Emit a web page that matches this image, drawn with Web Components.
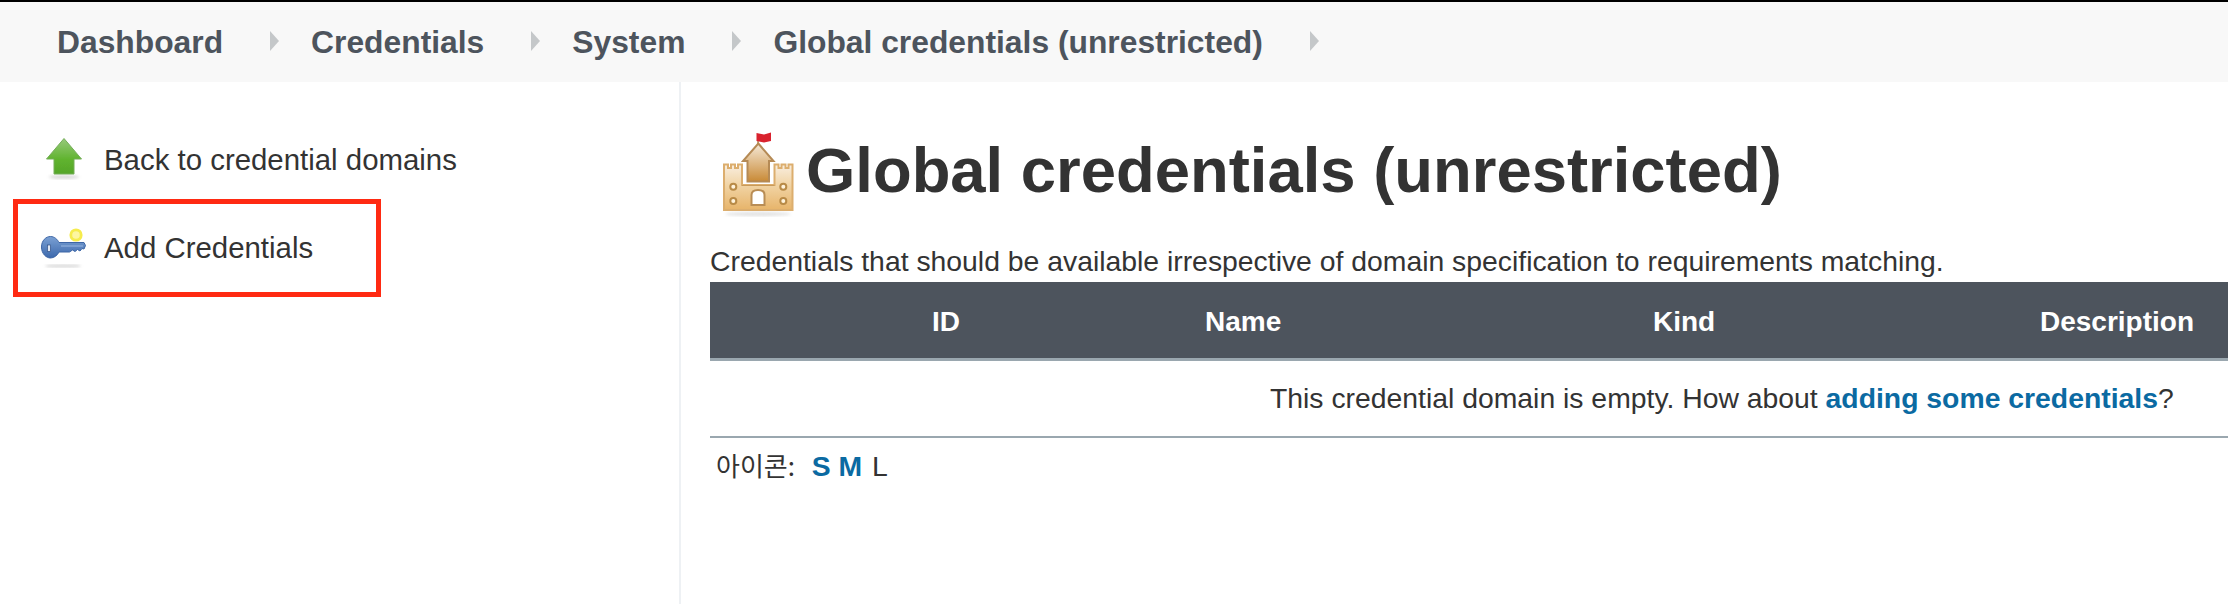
<!DOCTYPE html>
<html lang="en"><head><meta charset="utf-8"><title>Global credentials</title>
<style>
html,body{margin:0;padding:0;background:#fff;overflow:hidden}
body{font-family:"Liberation Sans",Arial,"Noto Sans CJK KR",sans-serif;color:#333}
</style></head><body>
<jk-page>
  <jk-breadcrumbs slot="top">
    <jk-crumb>Dashboard</jk-crumb><jk-crumb>Credentials</jk-crumb><jk-crumb>System</jk-crumb><jk-crumb>Global credentials (unrestricted)</jk-crumb>
  </jk-breadcrumbs>
  <jk-side slot="side">
    <jk-task icon="up">Back to credential domains</jk-task>
    <jk-task icon="key" highlighted>Add Credentials</jk-task>
  </jk-side>
  <jk-main>
    <jk-title>Global credentials (unrestricted)</jk-title>
    <jk-desc>Credentials that should be available irrespective of domain specification to requirements matching.</jk-desc>
    <jk-table></jk-table>
    <jk-iconsize></jk-iconsize>
  </jk-main>
</jk-page>
<script>
function def(name,html,init){
  customElements.define(name,class extends HTMLElement{
    constructor(){super();this.attachShadow({mode:"open"}).innerHTML=html;}
    connectedCallback(){if(init)init(this);}
  });
}
def("jk-page",`<style>
:host{display:flex;flex-direction:column;width:2228px;height:604px;border-top:2px solid #000;box-sizing:border-box}
.m{display:flex;flex:1;min-height:0}
</style><slot name="top"></slot><div class="m"><slot name="side"></slot><slot></slot></div>`);
def("jk-breadcrumbs",`<style>
:host{display:flex;align-items:center;gap:88px;height:80px;background:#f8f8f8;padding:1px 0 0 57px;box-sizing:border-box;flex:none}
</style><slot></slot>`);
def("jk-crumb",`<style>
:host{display:flex;align-items:center;position:relative;font-weight:700;font-size:31.8px;color:#4d545d;white-space:nowrap}
svg{position:absolute;left:100%;top:50%;margin:-12px 0 0 47px}
</style><span><slot></slot></span><svg width="9" height="20" viewBox="0 0 9 20"><path d="M0 0L9 10L0 20Z" fill="#c4c7c9"/></svg>`);
def("jk-side",`<style>
:host{display:flex;flex-direction:column;width:681px;flex:none;border-right:2px solid #eef1f4;box-sizing:border-box;padding:43px 0 0 13px}
</style><slot></slot>`);
const ICONS={
up:`<svg width="46" height="46" viewBox="0 0 46 46"><defs><linearGradient id="g" x1="0" y1="0" x2="0" y2="1"><stop offset="0" stop-color="#97c97b"/><stop offset=".6" stop-color="#5fb32e"/><stop offset="1" stop-color="#55a52a"/></linearGradient><filter id="b"><feGaussianBlur stdDeviation="1.6"/></filter><filter id="s"><feGaussianBlur stdDeviation=".45"/></filter></defs><ellipse cx="24" cy="40" rx="15" ry="2" fill="#bbb" opacity=".55" filter="url(#b)"/><path d="M24 1.500L41.500 22H34V37H14V22H6.500Z" fill="url(#g)" stroke="#74ad58" stroke-width="1" filter="url(#s)"/></svg>`,
key:`<svg width="46" height="46" viewBox="0 0 46 46"><defs><linearGradient id="k" x1="0" y1="0" x2="0" y2="1"><stop offset="0" stop-color="#7ba1d4"/><stop offset="1" stop-color="#3c68ac"/></linearGradient><filter id="kb"><feGaussianBlur stdDeviation="1.4"/></filter><filter id="ks"><feGaussianBlur stdDeviation=".5"/></filter></defs><ellipse cx="23" cy="41" rx="18" ry="1.600" fill="#bbb" opacity=".6" filter="url(#kb)"/><circle cx="36" cy="10" r="5.200" fill="#fdf6a0" stroke="#f6ec4e" stroke-width="2.800" filter="url(#ks)"/><path d="M1.500 22C1.500 15.500 6 11.500 10.500 11.500C14.500 11.500 17.500 14.500 19 17.500H44L45.500 20.500L44 24L42 23.500L40 26L37.500 24.500L35 26.500L32.500 25L29.500 27H19C17.500 30 14.500 33 10.500 33C6 33 1.500 28.500 1.500 22Z" fill="url(#k)" stroke="#3d66a6" stroke-width="1" filter="url(#ks)"/><rect x="7.500" y="20" width="3" height="6.500" fill="#dfe7f2" stroke="#2f4f86" stroke-width=".7"/><path d="M21 21H43" stroke="#8fb0dc" stroke-width="1.200"/></svg>`
};
def("jk-task",`<style>
:host{display:flex;align-items:center;font-size:29.4px;color:#333;white-space:nowrap;box-sizing:border-box;height:70px;width:368px;padding-left:22px;gap:18px;border:5px solid transparent;margin-bottom:4px}
:host([highlighted]){border-color:#ff2a12;height:98px}
.i{display:flex;flex:none}
</style><span class="i"></span><span><slot></slot></span>`,el=>{
  el.shadowRoot.querySelector(".i").innerHTML=ICONS[el.getAttribute("icon")];
});
def("jk-main",`<style>
:host{display:block;flex:1;min-width:0;padding:39px 0 0 29px;box-sizing:border-box}
</style><slot></slot>`);
def("jk-title",`<style>
:host{display:flex;align-items:center;gap:10px;height:100px;padding-left:10px}
h1{margin:0;font:700 63.4px/1 "Liberation Sans",Arial,sans-serif;color:#333;white-space:nowrap}
svg{display:block;flex:none;margin-top:8px}
</style><svg width="76" height="90" viewBox="0 0 76 90"><defs>
<linearGradient id="c" x1="0" y1="0" x2="0" y2="1"><stop offset="0" stop-color="#f9eee0"/><stop offset=".45" stop-color="#f1d4a5"/><stop offset="1" stop-color="#e7b46a"/></linearGradient>
<linearGradient id="t" x1="0" y1="0" x2="0" y2="1"><stop offset="0" stop-color="#f5e9d8"/><stop offset="1" stop-color="#c98a36"/></linearGradient>
<filter id="cs"><feGaussianBlur stdDeviation=".55"/></filter><filter id="cb"><feGaussianBlur stdDeviation="1.6"/></filter></defs>
<ellipse cx="38" cy="84" rx="33" ry="2.200" fill="#ccc" opacity=".55" filter="url(#cb)"/>
<g filter="url(#cs)" stroke-width="2">
<path d="M38 4V14" stroke="#b08a58" stroke-width="1.500"/>
<path d="M36.500 3L44 4.500L51 2.500V11L44 12.500L36.500 11Z" fill="#d9232e"/>
<path d="M38.300 13.500L53.500 31H49V51.500H27.500V31H23Z" fill="url(#t)" stroke="#b58a55"/>
<path d="M4 34.500H8V38H11V34.500H15V38H18V34.500H22V55H54.500V34.500H58.500V38H61.500V34.500H65.500V38H68.500V34.500H72.500V80H4Z" fill="url(#c)" stroke="#dcae6e"/>
<path d="M22 55.500H54.500" stroke="#c99a5a" stroke-width="1.200"/>
<path d="M31.500 75V65Q31.500 60 38 60Q44.500 60 44.500 65V75Z" fill="#fff" stroke="#b98d54"/>
<circle cx="13.300" cy="56.700" r="3" fill="#fff3dc" stroke="#b88a46"/><circle cx="63.300" cy="56.700" r="3" fill="#fff3dc" stroke="#b88a46"/><circle cx="13.300" cy="71" r="3" fill="#fff3dc" stroke="#b88a46"/><circle cx="63.300" cy="71" r="3" fill="#fff3dc" stroke="#b88a46"/>
</g></svg><h1><slot></slot></h1>`);
def("jk-desc",`<style>
:host{display:block;font-size:28.35px;line-height:41px;margin-top:20px;white-space:nowrap;color:#333}
</style><slot></slot>`);
def("jk-table",`<style>
:host{display:block;width:1518px;font-size:28.35px}
.h{display:grid;grid-template-columns:222px 273px 448px 387px 1fr;align-items:center;height:73px;padding-top:3px;background:#4d545d;color:#fff;font-weight:700;font-size:28px;border-bottom:3px solid #9aa7af}
.r{height:75px;display:flex;align-items:center;padding-left:560px;border-bottom:2px solid #9aa7af;white-space:nowrap;color:#333}
a{color:#0b6aa2;font-weight:700;text-decoration:none}
</style><div class="h"><span></span><span>ID</span><span>Name</span><span>Kind</span><span>Description</span></div>
<div class="r"><span>This credential domain is empty. How about <a href="#">adding some credentials</a>?</span></div>`);
def("jk-iconsize",`<style>
:host{display:block;font-size:28.35px;padding:8px 0 0 6px;white-space:nowrap;color:#333;font-family:"Liberation Sans","Noto Sans CJK KR",sans-serif}
a{color:#0b6aa2;font-weight:700;text-decoration:none}
.k{font-size:26px;font-family:"Noto Sans CJK KR",sans-serif;margin-right:1px}
.l{margin-left:2px}
</style><span class="k">아이콘:</span>&nbsp; <a href="#">S</a> <a href="#">M</a> <span class="l">L</span>`);
</script>
</body></html>
